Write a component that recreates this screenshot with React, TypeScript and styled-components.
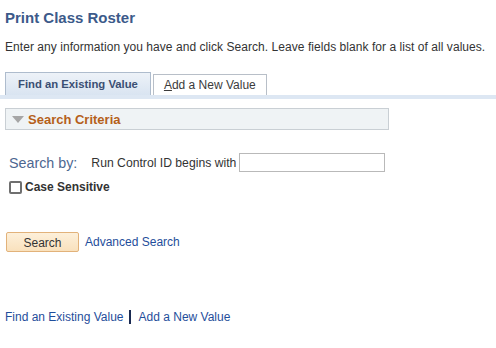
import React from 'react'
import styled, { createGlobalStyle } from 'styled-components'

const Global = createGlobalStyle`
  body {
    margin: 0;
    background: #fff;
    font-family: Arial, "Liberation Sans", sans-serif;
    color: #333;
  }
`

const Page = styled.div`
  width: 496px;
  height: 348px;
  overflow: hidden;
  display: flex;
  flex-direction: column;
`
const Title = styled.h1`
  margin: 9px 0 0 5px;
  font-size: 15px;
  font-weight: bold;
  color: #3c5a8a;
  line-height: 18px;
`
const Intro = styled.p`
  margin: 13px 0 0 5px;
  font-size: 12px;
  line-height: 14px;
  color: #333;
  letter-spacing: 0.05px;
`
const TabStrip = styled.div`
  margin-top: 18px;
  display: flex;
  align-items: flex-end;
  padding-left: 5px;
  gap: 2px;
  border-bottom: 4px solid #dde7f3;
`
const Tab = styled.div<{ $active?: boolean }>`
  height: ${p => (p.$active ? 23 : 21)}px;
  padding: 0 ${p => (p.$active ? 12 : 10)}px;
  display: flex;
  align-items: center;
  font-size: ${p => (p.$active ? 11.3 : 12)}px;
  border: 1px solid ${p => (p.$active ? '#aebccd' : '#b8bfc8')};
  border-bottom: none;
  box-sizing: border-box;
  color: ${p => (p.$active ? '#3a4f73' : '#3b3b3b')};
  font-weight: ${p => (p.$active ? 'bold' : 'normal')};
  background: ${p => (p.$active ? 'linear-gradient(#edf2f8, #d9e4f1)' : '#fff')};
  u { text-decoration: underline; }
`
const Section = styled.div`
  margin: 9px 0 0 5px;
  width: 384px;
  height: 22px;
  box-sizing: border-box;
  background: #eff3f5;
  border: 1px solid #c9cfd4;
  display: flex;
  align-items: center;
  padding-left: 6px;
  gap: 4px;
  font-size: 13px;
  font-weight: bold;
  color: #b5601a;
`
const Arrow = styled.span`
  width: 0;
  height: 0;
  border-left: 6px solid transparent;
  border-right: 6px solid transparent;
  border-top: 7px solid #a6a6a6;
  margin-top: 1px;
`
const SearchRow = styled.div`
  margin: 23px 0 0 9px;
  display: flex;
  align-items: center;
  height: 19px;
`
const SearchBy = styled.span`
  font-size: 14.3px;
  color: #4e6790;
  margin-right: 14px;
`
const Label = styled.span`
  font-size: 12.2px;
  color: #333;
  margin-right: 3px;
`
const TextInput = styled.input`
  width: 146px;
  height: 19px;
  box-sizing: border-box;
  border: 1px solid #b9b9b9;
  margin: 0;
  padding: 0 2px;
`
const CheckRow = styled.label`
  margin: 8px 0 0 9px;
  display: flex;
  align-items: center;
  gap: 3px;
  font-size: 12px;
  font-weight: bold;
  color: #333;
`
const Box = styled.span`
  width: 13px;
  height: 13px;
  box-sizing: border-box;
  border: 2px solid #6f6f6f;
  border-radius: 2px;
  background: #fff;
`
const ButtonRow = styled.div`
  margin: 38px 0 0 6px;
  display: flex;
  align-items: center;
  gap: 6px;
`
const Button = styled.button`
  width: 73px;
  height: 20px;
  box-sizing: border-box;
  border: 1px solid #e2b27a;
  border-radius: 2px;
  background: linear-gradient(#fdf0da, #f9e1bd);
  font-family: Arial, "Liberation Sans", sans-serif;
  font-size: 12px;
  color: #333;
  padding: 2px 0 0;
`
const Link = styled.a`
  font-size: 12px;
  color: #1f4e9b;
  text-decoration: none;
`
const Footer = styled.div`
  margin: 58px 0 0 5px;
  display: flex;
  align-items: center;
  gap: 5px;
`
const Divider = styled.span`
  width: 2px;
  height: 14px;
  background: #1a2a52;
  margin-right: 3px;
`

export default function App() {
  return (
    <Page>
      <Global />
      <Title>Print Class Roster</Title>
      <Intro>Enter any information you have and click Search. Leave fields blank for a list of all values.</Intro>
      <TabStrip>
        <Tab $active>Find an Existing Value</Tab>
        <Tab><span><u>A</u>dd a New Value</span></Tab>
      </TabStrip>
      <Section>
        <Arrow />
        Search Criteria
      </Section>
      <SearchRow>
        <SearchBy>Search by:</SearchBy>
        <Label>Run Control ID begins with</Label>
        <TextInput />
      </SearchRow>
      <CheckRow>
        <Box />
        Case Sensitive
      </CheckRow>
      <ButtonRow>
        <Button>Search</Button>
        <Link href="#">Advanced Search</Link>
      </ButtonRow>
      <Footer>
        <Link href="#">Find an Existing Value</Link>
        <Divider />
        <Link href="#">Add a New Value</Link>
      </Footer>
    </Page>
  )
}
